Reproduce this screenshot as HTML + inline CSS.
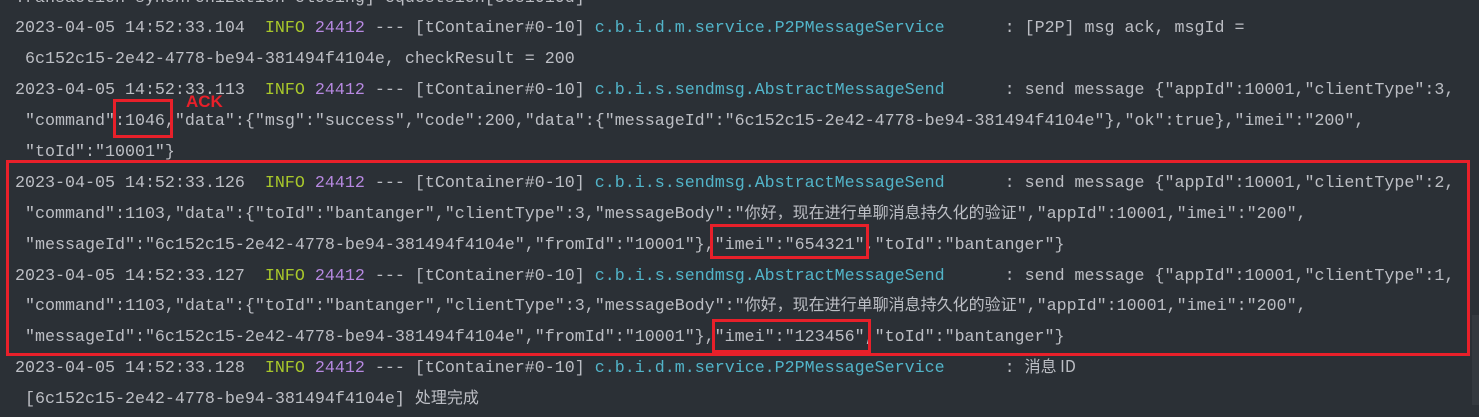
<!DOCTYPE html>
<html><head><meta charset="utf-8"><style>
html,body{margin:0;padding:0;width:1479px;height:417px;overflow:hidden;background:#2b3036;}
#c{position:absolute;left:15px;top:-16.5px;font-family:"Liberation Mono","Noto Sans CJK SC",monospace;font-size:16.67px;line-height:30.9px;color:#bcbec4;white-space:pre;}
#c>div{height:30.9px;overflow:visible}
.i{color:#a9c82b}.p{color:#b688e0}.k{color:#52b4c9}
.cj{font-family:"Noto Sans CJK SC",sans-serif;font-size:16px;line-height:1}
.box{position:absolute;border:3px solid #e8202a;box-sizing:border-box}
</style></head><body>
<div id="c"><div>Transaction synchronization closing] equestsion[5c81010d]</div><div>2023-04-05 14:52:33.104  <span class="i">INFO</span> <span class="p">24412</span> --- [tContainer#0-10] <span class="k">c.b.i.d.m.service.P2PMessageService     </span> : [P2P] msg ack, msgId =</div><div> 6c152c15-2e42-4778-be94-381494f4104e, checkResult = 200</div><div>2023-04-05 14:52:33.113  <span class="i">INFO</span> <span class="p">24412</span> --- [tContainer#0-10] <span class="k">c.b.i.s.sendmsg.AbstractMessageSend     </span> : send message {"appId":10001,"clientType":3,</div><div> "command":1046,"data":{"msg":"success","code":200,"data":{"messageId":"6c152c15-2e42-4778-be94-381494f4104e"},"ok":true},"imei":"200",</div><div> "toId":"10001"}</div><div>2023-04-05 14:52:33.126  <span class="i">INFO</span> <span class="p">24412</span> --- [tContainer#0-10] <span class="k">c.b.i.s.sendmsg.AbstractMessageSend     </span> : send message {"appId":10001,"clientType":2,</div><div> "command":1103,"data":{"toId":"bantanger","clientType":3,"messageBody":"<span class="cj">你好，现在进行单聊消息持久化的验证</span>","appId":10001,"imei":"200",</div><div> "messageId":"6c152c15-2e42-4778-be94-381494f4104e","fromId":"10001"},"imei":"654321","toId":"bantanger"}</div><div>2023-04-05 14:52:33.127  <span class="i">INFO</span> <span class="p">24412</span> --- [tContainer#0-10] <span class="k">c.b.i.s.sendmsg.AbstractMessageSend     </span> : send message {"appId":10001,"clientType":1,</div><div> "command":1103,"data":{"toId":"bantanger","clientType":3,"messageBody":"<span class="cj">你好，现在进行单聊消息持久化的验证</span>","appId":10001,"imei":"200",</div><div> "messageId":"6c152c15-2e42-4778-be94-381494f4104e","fromId":"10001"},"imei":"123456","toId":"bantanger"}</div><div>2023-04-05 14:52:33.128  <span class="i">INFO</span> <span class="p">24412</span> --- [tContainer#0-10] <span class="k">c.b.i.d.m.service.P2PMessageService     </span> : <span class="cj">消息 ID</span></div><div> [6c152c15-2e42-4778-be94-381494f4104e] <span class="cj">处理完成</span></div></div>
<div class="box" style="left:113px;top:99px;width:60px;height:39px"></div>
<div style="position:absolute;left:186px;top:92px;color:#e8202a;font:bold 17px 'Liberation Sans',sans-serif">ACK</div>
<div class="box" style="left:6px;top:160px;width:1464px;height:196px"></div>
<div class="box" style="left:710px;top:224px;width:159px;height:35px"></div>
<div class="box" style="left:712px;top:319px;width:159px;height:34px"></div>
<div style="position:absolute;left:1472px;top:315px;width:7px;height:90px;background:#34393f"></div>
</body></html>
